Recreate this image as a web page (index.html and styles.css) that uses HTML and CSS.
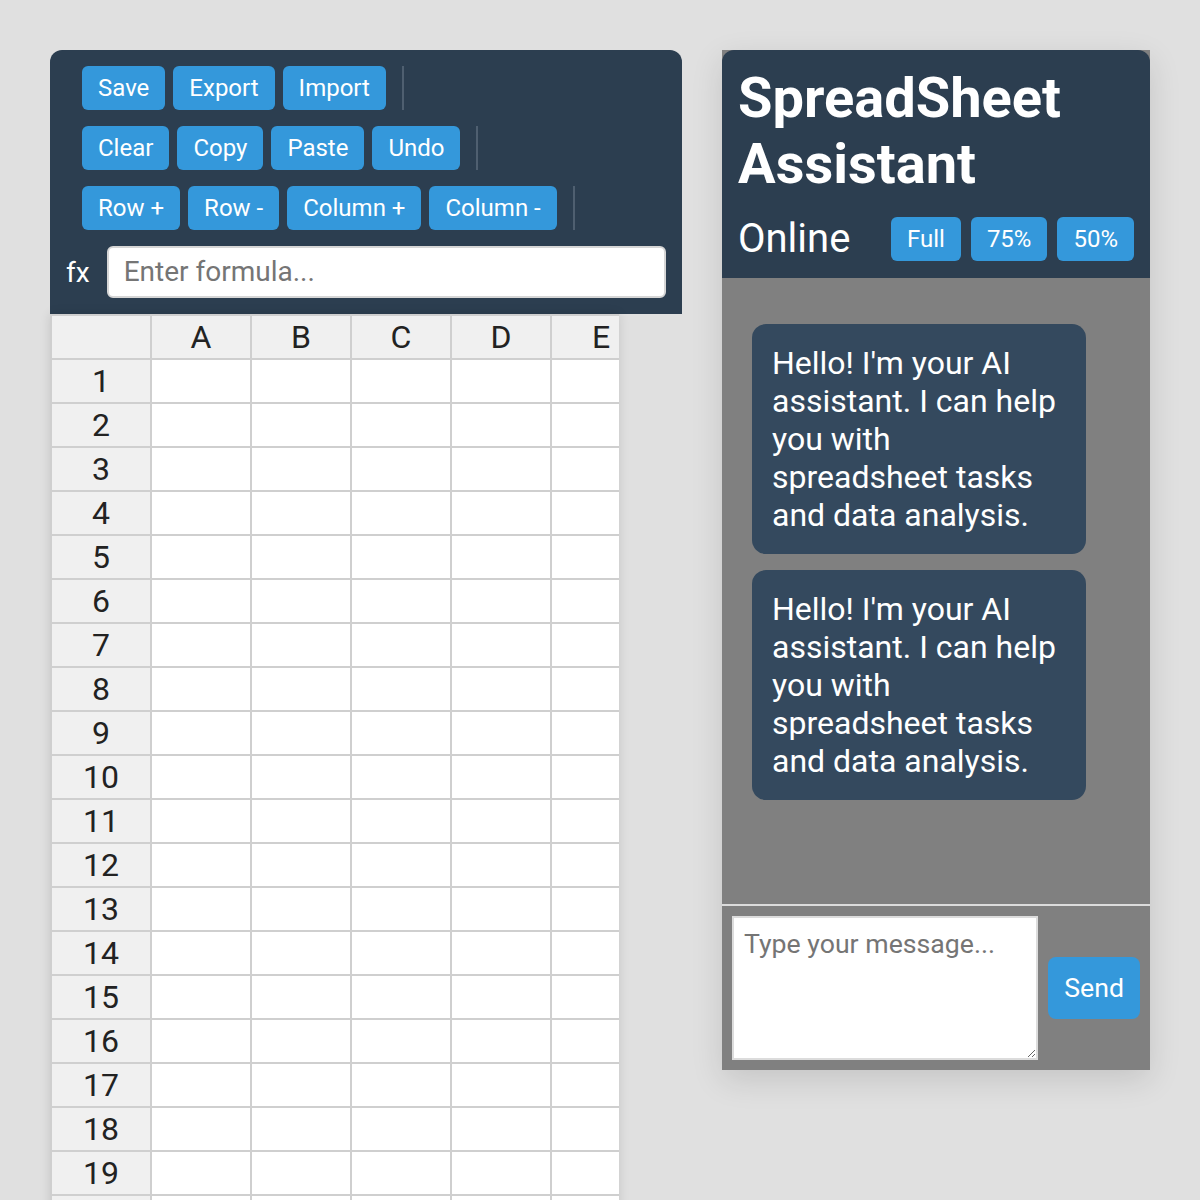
FILE: index.html
```html
<!DOCTYPE html>
<html lang="en">
<head>
  <meta charset="UTF-8" />
  <meta name="viewport" content="width=device-width, initial-scale=1.0" />
  <title>SpreadSheet Assistant</title>
  <link rel="stylesheet" href="styles.css">
</head>

<body>
  <div class="sheet-panel">
    <div class="toolbar">
      <div class="group">
        <button>Save</button>
        <button>Export</button>
        <button>Import</button>
      </div>
      <div class="group">
        <button>Clear</button>
        <button>Copy</button>
        <button>Paste</button>
        <button>Undo</button>
      </div>
      <div class="group">
        <button>Row +</button>
        <button>Row -</button>
        <button>Column +</button>
        <button>Column -</button>
      </div>
      <div class="formula">
        <span class="fx">fx</span>
        <input type="text" placeholder="Enter formula..." />
      </div>
    </div>

    <div class="grid-wrap">
      <table id="grid"></table>
    </div>
  </div>

  <div class="chat">
    <header>
      <h1>SpreadSheet Assistant</h1>
      <div class="status">
        <span>Online</span>
        <div class="sizes">
          <button>Full</button>
          <button>75%</button>
          <button>50%</button>
        </div>
      </div>
    </header>

    <div id="log">
      <div class="msg">Hello! I'm your AI assistant. I can help you with spreadsheet tasks and data analysis.</div>
      <div class="msg">Hello! I'm your AI assistant. I can help you with spreadsheet tasks and data analysis.</div>
    </div>

    <div class="row">
      <textarea placeholder="Type your message..."></textarea>
      <button class="send">Send</button>
    </div>
  </div>

  <script>
    const grid = document.getElementById("grid");
    const cols = "ABCDEFGH".split("");

    let head = "<tr><th class=\"corner\"></th>";
    cols.forEach(c => head += `<th>${c}</th>`);
    head += "</tr>";

    let body = "";
    for (let r = 1; r <= 25; r++) {
      body += `<tr><th class="num">${r}</th>`;
      cols.forEach(() => body += "<td></td>");
      body += "</tr>";
    }
    grid.innerHTML = head + body;
  </script>
</body>
</html>
```

FILE: styles.css
```css
:root {
  --dark: #2c3e50;
  --bubble: #34495e;
  --blue: #3498db;
  --bg: #e0e0e0;
  --line: #cfcfcf;
}

* {
  box-sizing: border-box;
}

body {
  margin: 0;
  padding: 50px;
  display: flex;
  align-items: flex-start;
  gap: 40px;
  background: var(--bg);
  font-family: Roboto, "Noto Sans", sans-serif;
  color: #222;
  overflow: hidden;
  height: 1200px;
}

button {
  font-family: inherit;
  font-size: 24px;
  color: #fff;
  background: var(--blue);
  border: none;
  border-radius: 6px;
  padding: 8px 16px;
  line-height: 28px;
  cursor: pointer;
}

/* sheet side */

.sheet-panel {
  width: 632px;
  flex-shrink: 0;
}

.toolbar {
  background: var(--dark);
  border-radius: 12px 12px 0 0;
  padding: 16px;
  display: flex;
  flex-direction: column;
  gap: 16px;
}

.group {
  display: flex;
  gap: 8px;
  align-self: flex-start;
  margin-left: 16px;
  padding-right: 16px;
  border-right: 2px solid #4f5f70;
}

.formula {
  display: flex;
  align-items: center;
  gap: 17px;
}

.fx {
  color: #fff;
  font-size: 28px;
}

.formula input {
  flex: 1;
  font-family: inherit;
  font-size: 28px;
  line-height: 32px;
  padding: 8px 15px;
  border: 2px solid #d6d6d6;
  border-radius: 6px;
  background: #fff;
  color: #222;
}

.formula input::placeholder {
  color: #757575;
}

.grid-wrap {
  width: 90%;
  overflow: hidden;
  box-shadow: 0 0 10px rgba(0, 0, 0, 0.12);
}

#grid {
  border-collapse: collapse;
  table-layout: fixed;
  width: 900px;
}

#grid th,
#grid td {
  width: 100px;
  height: 44px;
  padding: 0;
  border: 2px solid var(--line);
  font-size: 32px;
  font-weight: 400;
  text-align: center;
  background: #fff;
  color: #222;
}

#grid th {
  background: #f0f0f0;
}

/* chat side */

.chat {
  width: 428px;
  height: 1020px;
  flex-shrink: 0;
  background: #808080;
  display: flex;
  flex-direction: column;
  box-shadow: 0 10px 30px rgba(0, 0, 0, 0.12);
}

.chat header {
  background: var(--dark);
  border-radius: 12px 12px 0 0;
  padding: 16px;
  color: #fff;
}

h1 {
  margin: 0 0 18px;
  font-size: 56px;
  font-weight: 700;
  line-height: 1.17;
}

.status {
  display: flex;
  align-items: center;
  justify-content: space-between;
  font-size: 40px;
}

.sizes {
  display: flex;
  gap: 10px;
}

#log {
  flex: 1;
  padding: 30px;
  overflow-y: auto;
}

.msg {
  margin: 16px 0;
  max-width: 334px;
  padding: 20px;
  border-radius: 14px;
  background: var(--bubble);
  color: #fff;
  font-size: 32px;
  line-height: 38px;
}

.row {
  display: flex;
  align-items: center;
  gap: 10px;
  padding: 10px;
  border-top: 2px solid #dcdcdc;
}

textarea {
  flex: 1;
  height: 144px;
  padding: 10px;
  border: 2px solid #dcdcdc;
  font-family: inherit;
  font-size: 26.67px;
  background: #fff;
  color: #222;
}

textarea::placeholder {
  color: #757575;
}

.send {
  font-size: 26.67px;
  line-height: 30px;
  padding: 16px;
  border-radius: 8px;
}
```
